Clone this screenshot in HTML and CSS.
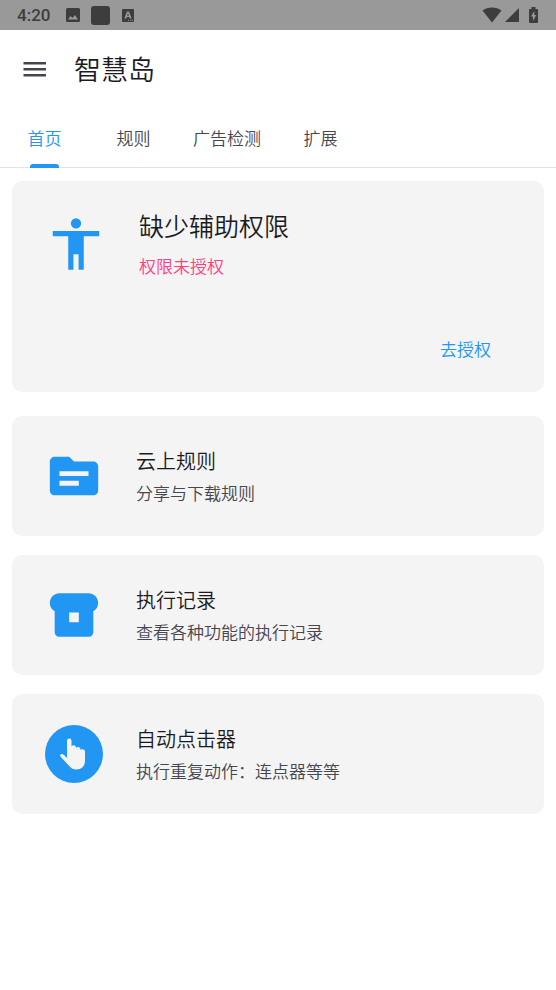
FILE: index.html
```html
<!DOCTYPE html>
<html lang="zh-CN">
<head>
<meta charset="utf-8">
<meta name="viewport" content="width=device-width, initial-scale=1">
<title>智慧岛</title>
<link rel="stylesheet" href="styles.css">
</head>
<body>
<div class="status">
  <span class="clock">4:20</span>
  <svg class="notice" width="14" height="14" viewBox="0 0 14 14" aria-hidden="true"><path fill-rule="evenodd" d="M1.500 0h11A1.500 1.500 0 0 1 14 1.500v11a1.500 1.500 0 0 1-1.500 1.500h-11A1.500 1.500 0 0 1 0 12.500v-11A1.500 1.500 0 0 1 1.500 0zM2 11.500h10L9 7l-2.500 3L4.500 8z"/></svg>
  <svg class="notice" width="19" height="19" viewBox="0 0 19 19" aria-hidden="true"><rect width="19" height="19" rx="3"/></svg>
  <svg class="notice letter" width="12" height="13" viewBox="0 0 12 13" aria-hidden="true"><path fill-rule="evenodd" d="M1 0h10a1 1 0 0 1 1 1v11a1 1 0 0 1-1 1H1a1 1 0 0 1-1-1V1a1 1 0 0 1 1-1zM5 2.500L2.300 9.500h1.900l.5-1.500h2.600l.5 1.500h1.900L7 2.500zM6 4.300L6.900 6.700H5.100zM6 10.800h1v1H6zm2 0h1v1H8zm2 0h1v1h-1z"/></svg>
  <span class="spacer"></span>
  <svg width="20" height="16" viewBox="0 0 20 16" aria-hidden="true"><path d="M10 15.500L.5 3.500C3 1.500 6.300.5 10 .5s7 1 9.500 3z"/></svg>
  <svg class="signal" width="14" height="14" viewBox="0 0 14 14" aria-hidden="true"><path d="M14 0v14H0z"/></svg>
  <svg class="battery" width="9" height="16" viewBox="0 0 9 16" aria-hidden="true"><path fill-rule="evenodd" d="M2.500 0h4v2H8a1 1 0 0 1 1 1v12a1 1 0 0 1-1 1H1a1 1 0 0 1-1-1V3a1 1 0 0 1 1-1h1.500zM5.300 4L2 9.500h2V14l3.200-6H5.300z"/></svg>
</div>
<header class="appbar">
  <button class="menu" type="button" aria-label="菜单"><svg width="24" height="16" viewBox="0 0 24 16" aria-hidden="true"><path d="M.5 1h22.500v2.400H.5zM.5 7h22.500v2.400H.5zM.5 13h22.500v2.400H.5z"/></svg></button>
  <h1>智慧岛</h1>
</header>
<nav class="tabs">
  <a class="tab active" href="#home">首页</a>
  <a class="tab" href="#rules">规则</a>
  <a class="tab" href="#ads">广告检测</a>
  <a class="tab" href="#more">扩展</a>
</nav>
<main>
  <section class="card permission">
    <div class="notice-row">
      <svg class="person" viewBox="0 0 24 24" aria-hidden="true"><path d="M12 2a2 2 0 1 1 0 4 2 2 0 0 1 0-4zm9 7h-6v13h-2v-6h-2v6H9V9H3V7h18z"/></svg>
      <div>
        <h2 class="headline">缺少辅助权限</h2>
        <p class="warning">权限未授权</p>
      </div>
    </div>
    <button class="grant" type="button">去授权</button>
  </section>
  <a class="card item" href="#cloud">
    <svg class="icon" viewBox="0 0 24 24" aria-hidden="true"><path fill-rule="evenodd" d="M20 6h-8l-2-2H4c-1.100 0-2 .9-2 2v12c0 1.100.9 2 2 2h16c1.100 0 2-.9 2-2V8c0-1.100-.9-2-2-2zm-6 10H6v-2h8v2zm4-4H6v-2h12v2z"/></svg>
    <span class="text"><span class="title">云上规则</span><span class="detail">分享与下载规则</span></span>
  </a>
  <a class="card item" href="#records">
    <svg class="icon" viewBox="0 0 24 24" aria-hidden="true"><path fill-rule="evenodd" d="M18 3H6C3.800 3 2 4.800 2 7c0 1.480.8 2.770 2 3.460V19c0 1.100.9 2 2 2h12c1.100 0 2-.9 2-2v-8.540c1.200-.69 2-1.980 2-3.460 0-2.200-1.800-4-4-4zM14 15h-4v-4h4z"/></svg>
    <span class="text"><span class="title">执行记录</span><span class="detail">查看各种功能的执行记录</span></span>
  </a>
  <a class="card item" href="#clicker">
    <svg class="icon" viewBox="0 0 58 58" aria-hidden="true"><circle cx="29" cy="29" r="29"/><path class="hand" d="M22 33V15.800a2.250 2.250 0 0 1 4.500 0V22c0-2.500 4.500-2.500 4.500.3v1c.5-2 4.300-1.700 4.500.7v1c.8-1.500 4.500-1 4.500 1.500V36c0 5-3.500 8.500-8.500 8.500-3.500 0-5.800-1.600-8-4.300L15.800 32c-2-2.600.9-4.200 3.200-2z"/></svg>
    <span class="text"><span class="title">自动点击器</span><span class="detail">执行重复动作：连点器等等</span></span>
  </a>
</main>
</body>
</html>
```
FILE: styles.css
```css
* { box-sizing: border-box; }
body {
  margin: 0;
  background: #fff;
  color: #1b1b1f;
  font-family: "Noto Sans CJK SC", sans-serif;
  font-weight: 350;
}
h1, h2, p { margin: 0; font-weight: inherit; }
button { border: 0; padding: 0; background: none; font: inherit; cursor: pointer; }
a { color: inherit; text-decoration: none; }
svg { display: block; flex: none; }

.status {
  display: flex;
  align-items: center;
  height: 30px;
  padding: 0 18px 0 17px;
  background: #999;
  color: #3d3d3d;
  fill: #3d3d3d;
}
.clock { margin-right: 5px; font: 500 17px/32px Roboto, sans-serif; }
.notice { margin-left: 11px; }
.letter { margin-left: 12px; }
.spacer { flex: 1; }
.signal { margin-left: 3px; }
.battery { margin-left: 10px; }

.appbar { display: flex; align-items: center; gap: 27px; height: 78px; padding: 0 23px; }
.menu { fill: #45454f; }
.appbar h1 { font-size: 27px; line-height: 40px; }

.tabs { display: flex; height: 60px; border-bottom: 1px solid #e2e1ec; }
.tab {
  position: relative;
  min-width: 89px;
  padding: 0 15px;
  color: #46464f;
  font-size: 17px;
  line-height: 59px;
  text-align: center;
}
.active { color: #2196f3; }
.active::after {
  content: "";
  position: absolute;
  bottom: -1px;
  left: 30px;
  right: 30px;
  height: 4px;
  border-radius: 3px 3px 0 0;
  background: #2196f3;
}

main { display: flex; flex-direction: column; gap: 19px; padding: 13px 12px; }
.card { border-radius: 10px; background: #f4f4f4; }
.permission { display: flex; flex-direction: column; margin-bottom: 5px; padding: 24px 53px 25px 33px; }
.notice-row { display: flex; gap: 32px; }
.person { width: 62px; height: 62px; margin-top: 8px; fill: #2196f3; }
.headline { font-size: 25px; line-height: 40px; }
.warning { margin-top: 9px; color: #ff4081; font-size: 17px; line-height: 24px; }
.grant { align-self: flex-end; margin-top: 53px; color: #2196f3; font-size: 17px; line-height: 36px; }

.item { display: flex; align-items: center; gap: 33px; height: 120px; padding: 0 33px; }
.icon { width: 58px; height: 58px; fill: #2196f3; }
.hand { fill: #f4f4f4; }
.text { display: flex; flex-direction: column; gap: 4px; }
.title { font-size: 20px; line-height: 30px; }
.detail { color: #46464f; font-size: 17px; line-height: 26px; }
```
